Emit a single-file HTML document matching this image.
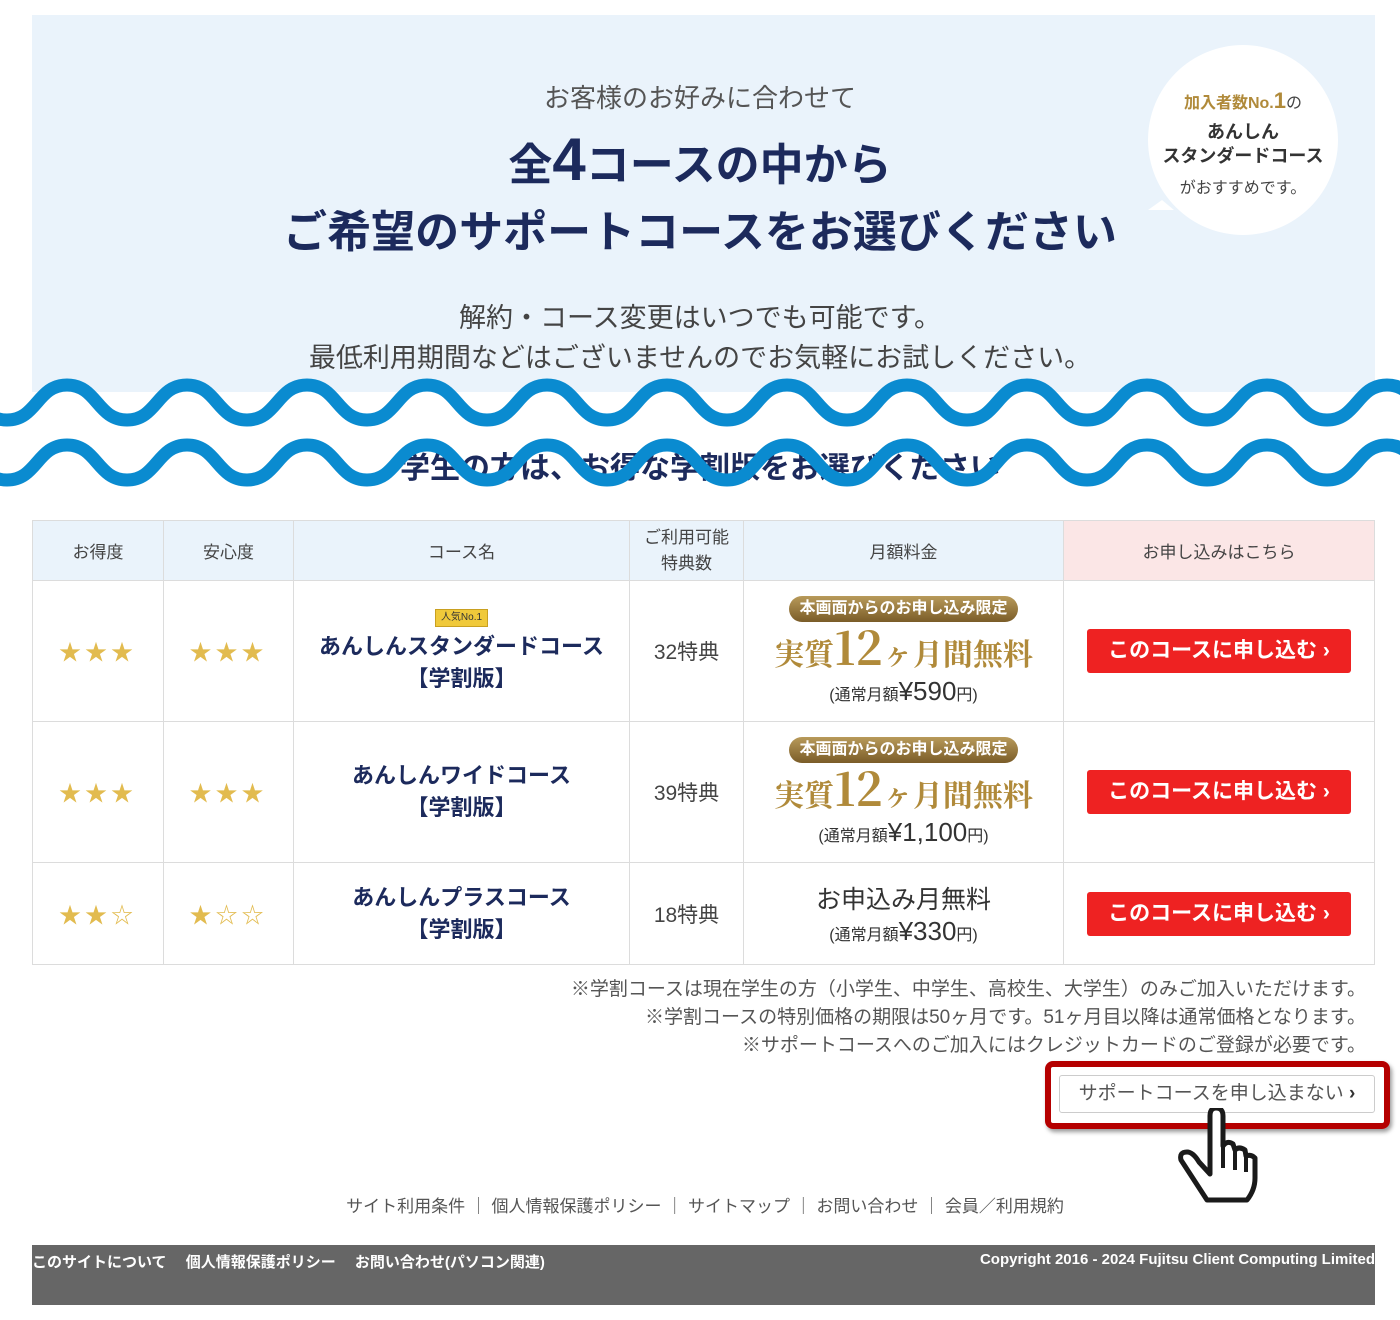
<!DOCTYPE html>
<html><head><meta charset="utf-8"><style>
*{margin:0;padding:0;box-sizing:border-box}
body{width:1400px;height:1320px;background:#fff;position:relative;overflow:hidden;font-family:"Liberation Sans","Noto Sans CJK JP",sans-serif;color:#333}
.a{position:absolute}
.c{text-align:center;white-space:nowrap}
table{position:absolute;left:32px;top:520px;width:1343px;border-collapse:collapse}
td,th{border:1px solid #dcdcdc;text-align:center;vertical-align:middle}
th{background:#eaf3fb;font-weight:normal;font-size:17px;color:#444;height:60px}
.star{color:#e2bb4f;font-size:22px;letter-spacing:4px}
.nm{color:#1c2a5c;font-weight:bold;font-size:22px;line-height:32px}
.gold{color:#b08a3a;font-family:"Noto Serif CJK SC","Liberation Serif",serif;font-weight:bold}
.tag{display:inline-block;background:linear-gradient(#b89a5a,#7a5c28);color:#fff;border-radius:14px;font-size:16px;font-weight:bold;padding:1px 10px;line-height:24px}
.btn{display:inline-block;background:#ee2222;color:#fff;font-weight:bold;font-size:21px;padding:0 14px;line-height:44px;border-radius:3px;width:264px}
</style></head><body>
<div class="a" style="left:32px;top:15px;width:1343px;height:377px;background:#eaf3fb"></div>
<div class="a c" style="left:0;width:1400px;top:78px;font-size:26px;color:#555">お客様のお好みに合わせて</div>
<div class="a c" style="left:0;width:1400px;top:130px;font-size:44px;font-weight:bold;color:#1c2a5c;line-height:60px">全<span style="font-size:60px">4</span>コースの中から</div>
<div class="a c" style="left:0;width:1400px;top:204px;font-size:44px;font-weight:bold;color:#1c2a5c;line-height:58px">ご希望のサポートコースをお選びください</div>
<div class="a c" style="left:0;width:1400px;top:296px;font-size:27px;color:#444">解約・コース変更はいつでも可能です。</div>
<div class="a c" style="left:0;width:1400px;top:336px;font-size:27px;color:#444">最低利用期間などはございませんのでお気軽にお試しください。</div>
<svg class="a" style="left:1140px;top:40px" width="210" height="205"><path d="M22 160 L8 170 L34 170 Z" fill="#fff"/><circle cx="103" cy="100" r="95" fill="#fff"/></svg>
<div class="a c" style="left:1148px;top:88px;width:190px;font-size:16px;font-weight:bold;color:#b08a3a">加入者数No.<span style="font-size:22px">1</span><span style="color:#444;font-weight:normal">の</span></div>
<div class="a c" style="left:1148px;top:120px;width:190px;font-size:18px;font-weight:bold;color:#333;line-height:24px">あんしん<br>スタンダードコース</div>
<div class="a c" style="left:1148px;top:174px;width:190px;font-size:16px;color:#444">がおすすめです。</div>
<div class="a c" style="left:0;width:1400px;top:443px;font-size:30px;font-weight:bold;color:#1c2a5c">学生の方は、お得な学割版をお選びください</div>
<svg class="a" style="left:0;top:370px" width="1400" height="130"><g fill="none" stroke="#0a8bd0" stroke-width="13" stroke-linejoin="round" stroke-linecap="round">
<path id="w" d="M-53 15 C-23 15 -23 50 7 50 S37 15 67 15 S97 50 127 50 S157 15 187 15 S217 50 247 50 S277 15 307 15 S337 50 367 50 S397 15 427 15 S457 50 487 50 S517 15 547 15 S577 50 607 50 S637 15 667 15 S697 50 727 50 S757 15 787 15 S817 50 847 50 S877 15 907 15 S937 50 967 50 S997 15 1027 15 S1057 50 1087 50 S1117 15 1147 15 S1177 50 1207 50 S1237 15 1267 15 S1297 50 1327 50 S1357 15 1387 15 S1417 50 1447 50"/>
<use href="#w" transform="translate(0,60)"/></g></svg>
<table>
<tr><th style="width:131px">お得度</th><th style="width:130px">安心度</th><th style="width:336px">コース名</th><th style="width:114px;line-height:26px">ご利用可能<br>特典数</th><th style="width:320px">月額料金</th><th style="background:#fbe6e6">お申し込みはこちら</th></tr>
<tr style="height:141px"><td class="star">★★★</td><td class="star">★★★</td><td><div style="display:inline-block;background:#f0c93a;border:1px solid #c9a020;font-size:10px;padding:0 5px;line-height:16px;margin-bottom:4px">人気No.1</div><div class="nm">あんしんスタンダードコース<br>【学割版】</div></td><td style="font-size:21px;color:#444">32特典</td><td><div class="tag">本画面からのお申し込み限定</div><div class="gold" style="font-size:30px;line-height:48px">実質<span style="font-size:46px">12</span>ヶ月間無料</div><div style="font-size:16px;color:#333">(通常月額<span style="font-size:26px">¥590</span>円)</div></td><td><span class="btn">このコースに申し込む ›</span></td></tr>
<tr style="height:141px"><td class="star">★★★</td><td class="star">★★★</td><td><div class="nm">あんしんワイドコース<br>【学割版】</div></td><td style="font-size:21px;color:#444">39特典</td><td><div class="tag">本画面からのお申し込み限定</div><div class="gold" style="font-size:30px;line-height:48px">実質<span style="font-size:46px">12</span>ヶ月間無料</div><div style="font-size:16px;color:#333">(通常月額<span style="font-size:26px">¥1,100</span>円)</div></td><td><span class="btn">このコースに申し込む ›</span></td></tr>
<tr style="height:102px"><td class="star">★★☆</td><td class="star">★☆☆</td><td><div class="nm">あんしんプラスコース<br>【学割版】</div></td><td style="font-size:21px;color:#444">18特典</td><td><div style="font-size:25px;color:#333">お申込み月無料</div><div style="font-size:16px;color:#333">(通常月額<span style="font-size:26px">¥330</span>円)</div></td><td><span class="btn">このコースに申し込む ›</span></td></tr>
</table>
<div class="a" style="right:34px;top:976px;text-align:right;font-size:19px;color:#555;line-height:28px;white-space:nowrap">※学割コースは現在学生の方（小学生、中学生、高校生、大学生）のみご加入いただけます。<br>※学割コースの特別価格の期限は50ヶ月です。51ヶ月目以降は通常価格となります。<br>※サポートコースへのご加入にはクレジットカードのご登録が必要です。</div>
<div class="a" style="left:1045px;top:1061px;width:345px;height:68px;border:6px solid #b50000;border-radius:8px;box-shadow:2px 3px 4px rgba(0,0,0,.4)"></div>
<div class="a c" style="left:1059px;top:1075px;width:316px;height:38px;border:1px solid #ccc;border-radius:3px;background:#fff;font-size:19px;color:#555;line-height:36px">サポートコースを申し込まない <b style="color:#333">›</b></div>
<svg class="a" style="left:1175px;top:1108px" width="85" height="95"><path d="M35 8 Q35 0 41 0 Q48 0 48 8 L48 38 Q52 32 58 36 L60 42 Q64 38 70 42 L71 48 Q76 46 80 50 L80 70 Q80 82 72 92 L32 92 L6 52 Q4 44 12 44 Q18 44 24 54 L35 66 Z" fill="#fff" stroke="#1a1a1a" stroke-width="5" stroke-linejoin="round"/><path d="M48 38 L48 60 M60 42 L60 62 M71 48 L71 64" stroke="#1a1a1a" stroke-width="4"/></svg>
<div class="a c" style="left:0;width:1410px;top:1192px;font-size:17px;color:#555">サイト利用条件 ｜ 個人情報保護ポリシー ｜ サイトマップ ｜ お問い合わせ ｜ 会員／利用規約</div>
<div class="a" style="left:32px;top:1245px;width:1343px;height:60px;background:#666"></div>
<div class="a" style="left:32px;top:1251px;font-size:15px;font-weight:bold;color:#fff;white-space:nowrap">このサイトについて　 個人情報保護ポリシー　 お問い合わせ(パソコン関連)</div>
<div class="a" style="right:25px;top:1251px;font-size:15px;font-weight:bold;color:#fff;white-space:nowrap">Copyright 2016 - 2024 Fujitsu Client Computing Limited</div>
</body></html>
